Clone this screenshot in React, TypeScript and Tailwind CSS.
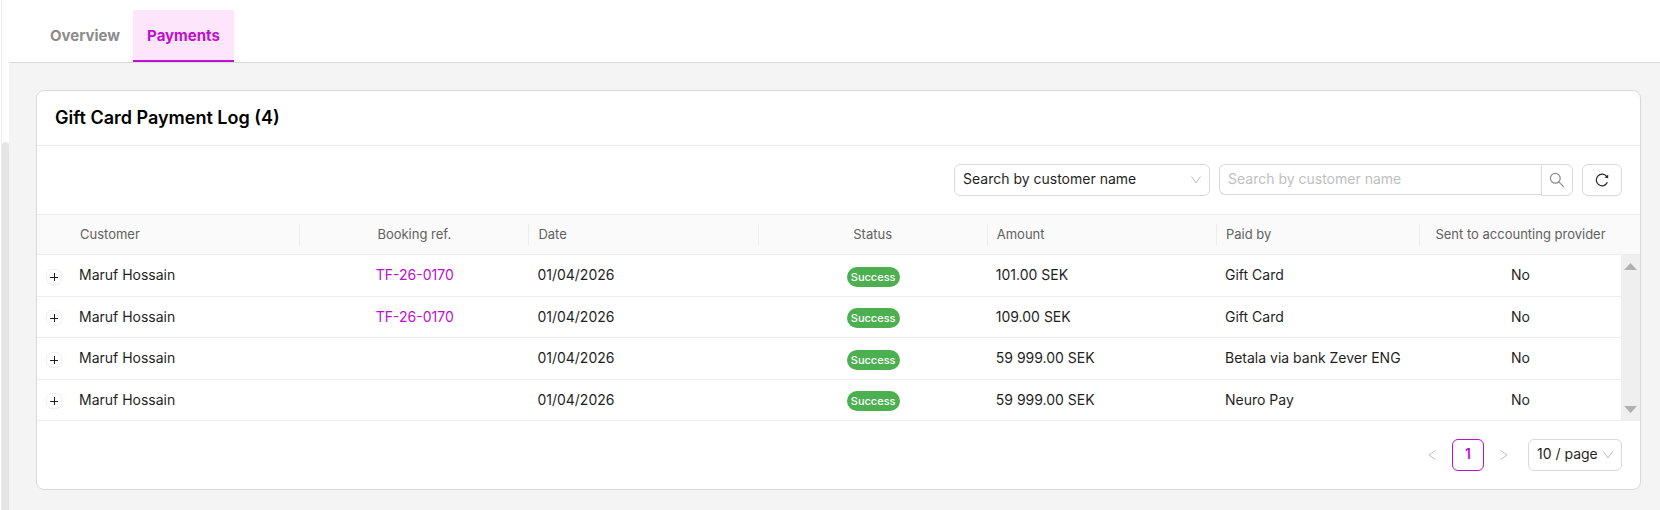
import type { ReactNode } from "react";
import clsx from "clsx";

type Payment = {
  customer: string;
  bookingRef?: string;
  date: string;
  status: string;
  amount: string;
  paidBy: string;
  sent: string;
};

const payments: Payment[] = [
  {
    customer: "Maruf Hossain",
    bookingRef: "TF-26-0170",
    date: "01/04/2026",
    status: "Success",
    amount: "101.00 SEK",
    paidBy: "Gift Card",
    sent: "No",
  },
  {
    customer: "Maruf Hossain",
    bookingRef: "TF-26-0170",
    date: "01/04/2026",
    status: "Success",
    amount: "109.00 SEK",
    paidBy: "Gift Card",
    sent: "No",
  },
  {
    customer: "Maruf Hossain",
    date: "01/04/2026",
    status: "Success",
    amount: "59 999.00 SEK",
    paidBy: "Betala via bank Zever ENG",
    sent: "No",
  },
  {
    customer: "Maruf Hossain",
    date: "01/04/2026",
    status: "Success",
    amount: "59 999.00 SEK",
    paidBy: "Neuro Pay",
    sent: "No",
  },
];

const columns = [
  { title: "Customer", center: false },
  { title: "Booking ref.", center: true },
  { title: "Date", center: false },
  { title: "Status", center: true },
  { title: "Amount", center: false },
  { title: "Paid by", center: false },
  { title: "Sent to accounting provider", center: true },
];

function Chevron({ className }: { className?: string }) {
  return (
    <svg viewBox="0 0 12 12" className={clsx("size-3 fill-none stroke-[#bfbfbf]", className)} aria-hidden="true">
      <path d="M1.5 2.5 6 9 10.5 2.5" />
    </svg>
  );
}

function SearchIcon() {
  return (
    <svg viewBox="0 0 16 16" className="size-4 fill-none stroke-[#8c8c8c]" strokeWidth="1.2" aria-hidden="true">
      <circle cx="6.3" cy="6.3" r="4.9" />
      <path d="m9.8 9.8 5 5" />
    </svg>
  );
}

function ReloadIcon() {
  return (
    <svg viewBox="0 0 16 16" className="size-4 fill-none stroke-[#262626]" strokeWidth="1.2" aria-hidden="true">
      <path d="M13.4 10.3A5.8 5.8 0 1 1 12.7 4.5" />
      <path d="M14.2 2.4v3.8l-3.6-.8z" className="fill-[#262626] stroke-none" />
    </svg>
  );
}

function Cell({ center, children }: { center?: boolean; children?: ReactNode }) {
  return (
    <td className={clsx("border-b border-[#ededed] px-2 pb-px", center && "text-center")}>{children}</td>
  );
}

function Tabs() {
  return (
    <nav className="flex border-b border-[#d9d9d9] bg-white pt-[10px] pl-7 text-[15px]">
      <a
        href="#overview"
        className="flex h-13 items-center border-b-2 border-transparent px-[13px] pt-0.5 font-bold text-[#8c8c8c]"
      >
        Overview
      </a>
      <a
        href="#payments"
        aria-current="page"
        className="flex h-13 items-center border-b-2 border-[#bd10d0] bg-[#fde6fb] px-[14px] pt-0.5 font-bold text-[#bd10d0]"
      >
        Payments
      </a>
    </nav>
  );
}

function Toolbar() {
  return (
    <div className="flex justify-end gap-[9px] px-[18px] py-[18px]">
      <div className="relative w-64">
        <select
          aria-label="Search field"
          className="h-8 w-full appearance-none rounded-md border border-[#d9d9d9] bg-white pr-8 pb-0.5 pl-2 text-[#1f1f1f]"
        >
          <option>Search by customer name</option>
        </select>
        <Chevron className="pointer-events-none absolute top-[10px] right-2" />
      </div>
      <div className="flex w-[354px]">
        <input
          type="text"
          aria-label="Search by customer name"
          placeholder="Search by customer name"
          className="h-[31px] min-w-0 flex-1 rounded-l-md border border-r-0 border-[#d9d9d9] px-2 pb-0.5 placeholder:text-[#bfbfbf]"
        />
        <button
          type="button"
          aria-label="Search"
          className="flex h-8 w-8 items-center justify-center rounded-r-md border border-[#d9d9d9]"
        >
          <SearchIcon />
        </button>
      </div>
      <button
        type="button"
        aria-label="Reload"
        className="flex h-8 w-10 items-center justify-center rounded-md border border-[#d9d9d9] shadow-[0_2px_0_rgba(0,0,0,0.02)]"
      >
        <ReloadIcon />
      </button>
    </div>
  );
}

function PaymentTable() {
  return (
    <table className="w-full table-fixed border-separate border-spacing-0 border-t border-[#ededed]">
      <colgroup>
        <col className="w-[34px]" />
        <col />
        <col />
        <col />
        <col />
        <col />
        <col className="w-[203px]" />
        <col className="w-[201px]" />
        <col className="w-[19px]" />
      </colgroup>
      <thead className="bg-[#fafafa] text-[13px] text-[#616161]">
        <tr className="h-10">
          <td className="border-b border-[#ededed]" />
          {columns.map((col, i) => (
            <th key={col.title} scope="col" className="border-b border-[#ededed] p-0 font-normal">
              <div
                className={clsx(
                  "flex h-[21px] items-center px-[9px] pb-0.5 whitespace-nowrap",
                  col.center && "justify-center",
                  i < columns.length - 1 && "border-r border-[#ededed]",
                )}
              >
                {col.title}
              </div>
            </th>
          ))}
          <td className="border-b border-[#ededed]" />
        </tr>
      </thead>
      <tbody className="text-[#1f1f1f]">
        {payments.map((p, i) => (
          <tr key={i} className="h-[42px] even:h-[41px]">
            <td className="border-b border-[#ededed] p-0 pt-0.5">
              <button
                type="button"
                aria-label="Expand row"
                className="mx-auto flex size-4 items-center justify-center rounded-md border border-[#f0f0f0]"
              >
                <svg viewBox="0 0 8 8" className="size-2 stroke-[#1f1f1f]" aria-hidden="true">
                  <path d="M0 4.5h8M4.5 0v8" />
                </svg>
              </button>
            </td>
            <Cell>{p.customer}</Cell>
            <Cell center>
              {p.bookingRef && (
                <a href={`#${p.bookingRef}`} className="text-[#bd10d0]">
                  {p.bookingRef}
                </a>
              )}
            </Cell>
            <Cell>{p.date}</Cell>
            <td className="border-b border-[#ededed] px-2 pt-0.5">
              <span className="mx-auto block h-5 w-[53px] rounded-full bg-[#4caf50] text-center text-[11px] leading-5 font-medium text-white">
                {p.status}
              </span>
            </td>
            <Cell>{p.amount}</Cell>
            <Cell>{p.paidBy}</Cell>
            <Cell center>{p.sent}</Cell>
            {i === 0 && (
              <td rowSpan={payments.length} className="h-px bg-[#efefef] p-0">
                <div className="flex h-full flex-col items-center justify-between py-2">
                  <svg viewBox="0 0 13 7" className="h-[7px] w-[13px] fill-[#b0b0b0]" aria-hidden="true">
                    <path d="M6.5 0 13 7H0z" />
                  </svg>
                  <svg viewBox="0 0 13 7" className="h-[7px] w-[13px] fill-[#b0b0b0]" aria-hidden="true">
                    <path d="M0 0h13L6.5 7z" />
                  </svg>
                </div>
              </td>
            )}
          </tr>
        ))}
      </tbody>
    </table>
  );
}

function Pagination() {
  return (
    <div className="flex items-center justify-end px-[18px] py-[18px]">
      <button type="button" aria-label="Previous page" className="flex size-8 items-center justify-center">
        <Chevron className="rotate-90" />
      </button>
      <button
        type="button"
        aria-current="page"
        className="mx-1 size-8 rounded-md border border-[#bd10d0] pb-0.5 font-semibold text-[#bd10d0]"
      >
        1
      </button>
      <button type="button" aria-label="Next page" className="flex size-8 items-center justify-center">
        <Chevron className="-rotate-90" />
      </button>
      <div className="relative ml-2 w-[94px]">
        <select
          aria-label="Page size"
          className="h-8 w-full appearance-none rounded-md border border-[#d9d9d9] bg-white pr-6 pb-0.5 pl-2 text-[#1f1f1f]"
        >
          <option>10 / page</option>
        </select>
        <Chevron className="pointer-events-none absolute top-[10px] right-2" />
      </div>
    </div>
  );
}

export default function App() {
  return (
    <div className="flex min-h-screen bg-[#f4f4f4] font-[Inter,sans-serif] text-[14px] leading-5">
      {/* Sidebar edge with its scroll thumb */}
      <div className="flex w-[9px] shrink-0 bg-white pl-px">
        <div className="flex flex-1 flex-col border-l border-[#ededed] pt-[142px]">
          <div className="flex-1 rounded-t-full bg-[#e5e5e5]" />
        </div>
      </div>
      <div className="min-w-0 flex-1">
        <Tabs />
        <main className="py-[27px] pr-[19px] pl-[27px]">
          <section className="overflow-hidden rounded-lg border border-[#d9d9d9] bg-white">
            <h1 className="flex h-[55px] items-center border-b border-[#ededed] px-[18px] text-[18px] font-semibold text-black">
              Gift Card Payment Log (4)
            </h1>
            <Toolbar />
            <PaymentTable />
            <Pagination />
          </section>
        </main>
      </div>
    </div>
  );
}
